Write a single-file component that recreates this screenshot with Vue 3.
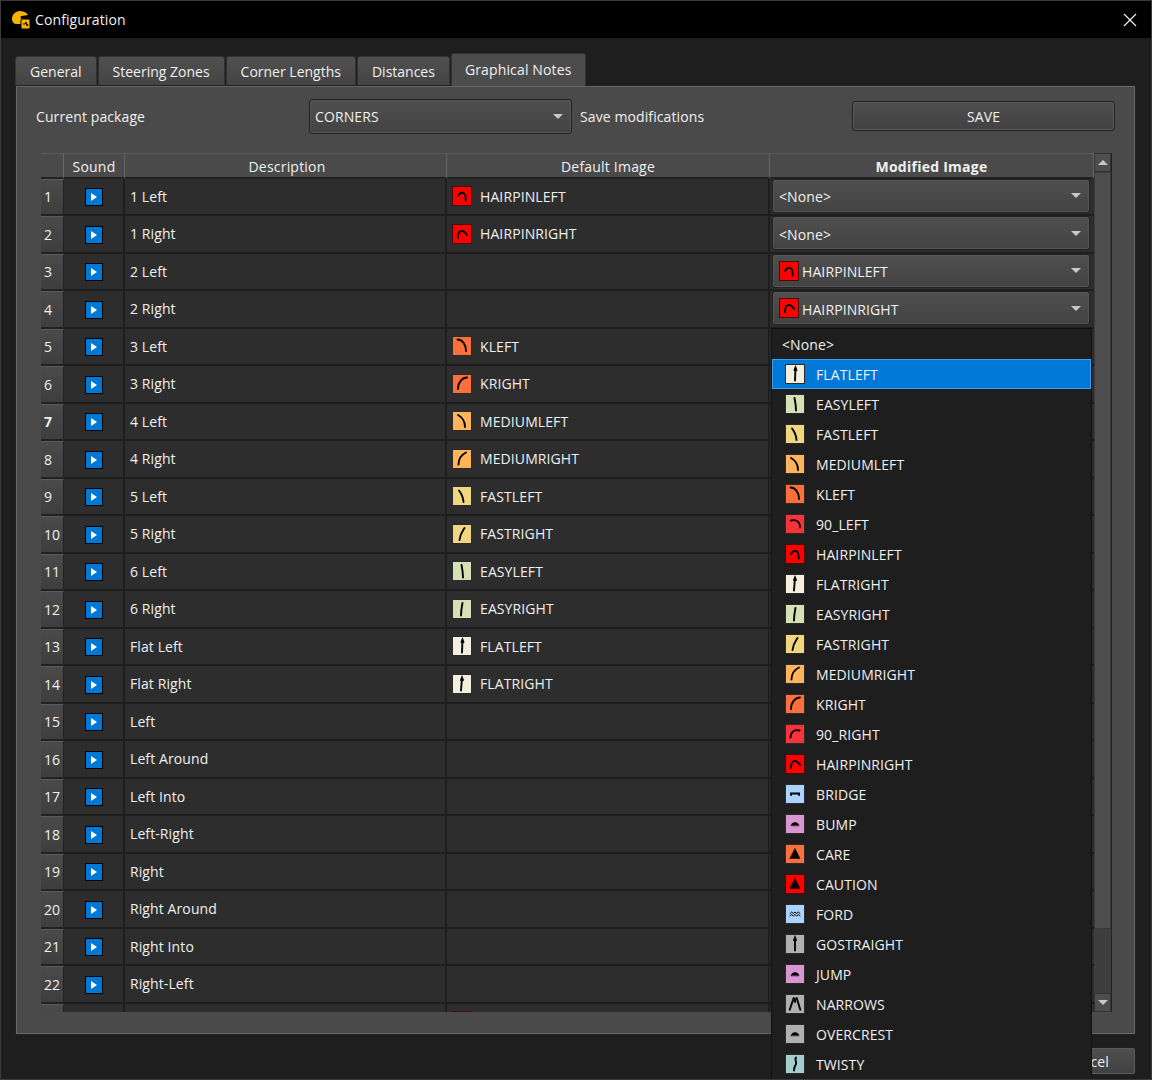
<template>
  <div class="window">
    <header class="titlebar">
      <svg class="app-icon" width="20" height="20" viewBox="0 0 20 20">
        <path d="M1 9C1 4 5 1 9 1c3 0 6 1 8 4l-6 1c-2 0-2 2 0 3v5H6C3 14 1 12 1 9z" fill="#f5b301" />
        <rect x="10" y="9" width="9" height="10" rx="1" fill="#f5b301" stroke="#000" />
        <path d="M12 14h2l1-2 1 4 1-2" fill="none" stroke="#000" />
      </svg>
      <span class="title">Configuration</span>
      <svg class="close" width="14" height="14" viewBox="0 0 14 14">
        <path d="M1 1l12 12M13 1L1 13" stroke="#f0f0f0" stroke-width="1.2" />
      </svg>
    </header>

    <div class="content">
      <nav class="tabs">
        <div v-for="tab in tabs" :key="tab" class="tab" :class="{ active: tab === 'Graphical Notes' }">{{ tab }}</div>
      </nav>

      <section class="panel">
        <div class="controls">
          <span class="package-label">Current package</span>
          <div class="combo package-combo">
            <span>CORNERS</span>
            <i class="caret"></i>
          </div>
          <span class="save-label">Save modifications</span>
          <button class="btn save-btn">SAVE</button>
        </div>

        <div class="table">
          <div class="table-main">
            <div class="row head">
              <div class="corner"></div>
              <div class="hcell">Sound</div>
              <div class="hcell description">Description</div>
              <div class="hcell">Default Image</div>
              <div class="hcell strong">Modified Image</div>
            </div>
            <div v-for="(row, i) in rows" :key="i" class="row">
              <div class="num" :class="{ bold: i === 6 }">{{ row.label ? i + 1 : '' }}</div>
              <div class="cell sound"><span v-if="row.label" class="play"><i></i></span></div>
              <div class="cell">{{ row.label }}</div>
              <div class="cell image">
                <template v-if="row.image">
                  <svg class="note" viewBox="0 0 20 20">
                    <rect x="0.5" y="0.5" width="19" height="19" :fill="notes[row.image].color" :stroke="edge(row.image)" />
                    <path :d="notes[row.image].path" :fill="notes[row.image].solid ? '#000' : 'none'" stroke="#000" :stroke-width="notes[row.image].solid ? 0.5 : 1.9" stroke-linecap="round" />
                  </svg>
                  <span v-if="row.label" class="image-name">{{ row.image }}</span>
                </template>
              </div>
              <div class="cell modified">
                <div v-if="i < 4" class="combo cell-combo">
                  <svg v-if="row.modified" class="note" viewBox="0 0 20 20">
                    <rect x="0.5" y="0.5" width="19" height="19" :fill="notes[row.modified].color" :stroke="edge(row.modified)" />
                    <path :d="notes[row.modified].path" fill="none" stroke="#000" stroke-width="1.9" stroke-linecap="round" />
                  </svg>
                  <span class="combo-text">{{ row.modified || '<None>' }}</span>
                  <i class="caret"></i>
                </div>
              </div>
            </div>
          </div>
          <div class="scrollbar">
            <div class="arrow"><i class="up"></i></div>
            <div class="thumb"></div>
            <div class="arrow bottom"><i class="caret"></i></div>
          </div>
        </div>
      </section>

      <footer class="actions">
        <button class="btn cancel-btn">Cancel</button>
      </footer>
    </div>

    <ul class="popup">
      <li class="none">&lt;None&gt;</li>
      <li v-for="name in options" :key="name" class="option" :class="{ selected: name === 'FLATLEFT' }">
        <svg class="note" viewBox="0 0 20 20">
          <rect x="0.5" y="0.5" width="19" height="19" :fill="notes[name].color" :stroke="edge(name)" />
          <path :d="notes[name].path" :fill="notes[name].solid ? '#000' : 'none'" stroke="#000" :stroke-width="notes[name].solid ? 0.5 : (notes[name].thin ? 1 : 1.9)" stroke-linecap="round" />
        </svg>
        <span>{{ name }}</span>
      </li>
    </ul>
  </div>
</template>

<script setup>
const tabs = ['General', 'Steering Zones', 'Corner Lengths', 'Distances', 'Graphical Notes']

const notes = {
  FLATLEFT: { color: '#f3efdf', path: 'M10.500 3.500L10 16.500M9.500 6l1-2.500 1 2.500' },
  EASYLEFT: { color: '#d6e0b4', path: 'M9.500 4C10 7 11 10 11 16.500' },
  FASTLEFT: { color: '#f0d77f', path: 'M7 4.500C9 7 11 10 11.500 16' },
  MEDIUMLEFT: { color: '#ffb35a', path: 'M6 4c4 2 7 6 7 12' },
  KLEFT: { color: '#ff6f3c', path: 'M5.500 3.500C10 3.500 14 8 14 15' },
  '90_LEFT': { color: '#f93339', path: 'M6 6.500c4-1 9 0 9 7' },
  HAIRPINLEFT: { color: '#ff0000', path: 'M6 10C7.500 7 10 6 12 7.500S13.500 12 13.700 14.500' },
  FLATRIGHT: { color: '#f3efdf', path: 'M10 3.500L9 16.500M9 6l1-2.500 1 2.500' },
  EASYRIGHT: { color: '#d6e0b4', path: 'M10.500 4C10 7 9 10 9 16.500' },
  FASTRIGHT: { color: '#f0d77f', path: 'M12.500 4C10.500 7 8 10 7.500 16' },
  MEDIUMRIGHT: { color: '#ffb35a', path: 'M14 3.500c-4 2-7.500 6-7.500 12' },
  KRIGHT: { color: '#ff6f3c', path: 'M15 3.500C10.500 3.500 6 8 6 15' },
  '90_RIGHT': { color: '#f93339', path: 'M14.500 6.500c-4-1-8.500 0-9 7' },
  HAIRPINRIGHT: { color: '#ff0000', path: 'M15 11C13 7.500 10 6 8 7.500S6 12 6 14' },
  BRIDGE: { color: '#aad4ff', path: 'M6 11V9.500h8V11' },
  BUMP: { color: '#d896d0', solid: true, path: 'M6 11.500c.5-2 2-3 4-3s3.500 1 4 3z' },
  CARE: { color: '#ff6f3c', solid: true, path: 'M10 4.500l5 10H5z' },
  CAUTION: { color: '#ff0000', solid: true, path: 'M10 4.500l5 10H5z' },
  FORD: { color: '#aad4ff', thin: true, path: 'M5 9.500l1.700-1.500 1.600 1.500L10 8l1.700 1.500L13.300 8l1.700 1.500M5 12l1.700-1.500 1.600 1.500 1.700-1.500 1.700 1.500 1.600-1.500L15 12' },
  GOSTRAIGHT: { color: '#b0b0b0', path: 'M10 3.500v13M9 6l1-2.500 1 2.500' },
  JUMP: { color: '#d896d0', solid: true, path: 'M6 11.500c.5-2 2-3 4-3s3.500 1 4 3z' },
  NARROWS: { color: '#b0b0b0', path: 'M8.700 4L4.700 15.700M11.700 4l3.600 11.700M10 5v3' },
  OVERCREST: { color: '#b0b0b0', solid: true, path: 'M6 11.500c.5-2 2-3 4-3s3.500 1 4 3z' },
  TWISTY: { color: '#a5cdd0', path: 'M11 3.500c-2 2 1 4 0 6.500s-2 3-2 6.500' }
}

const options = Object.keys(notes)

// border of a note icon, dark red on the red ones
const edge = (name) => (notes[name].color === '#ff0000' ? '#4a0808' : '#2a2a2a')

const rows = [
  { label: '1 Left', image: 'HAIRPINLEFT' },
  { label: '1 Right', image: 'HAIRPINRIGHT' },
  { label: '2 Left', modified: 'HAIRPINLEFT' },
  { label: '2 Right', modified: 'HAIRPINRIGHT' },
  { label: '3 Left', image: 'KLEFT' },
  { label: '3 Right', image: 'KRIGHT' },
  { label: '4 Left', image: 'MEDIUMLEFT' },
  { label: '4 Right', image: 'MEDIUMRIGHT' },
  { label: '5 Left', image: 'FASTLEFT' },
  { label: '5 Right', image: 'FASTRIGHT' },
  { label: '6 Left', image: 'EASYLEFT' },
  { label: '6 Right', image: 'EASYRIGHT' },
  { label: 'Flat Left', image: 'FLATLEFT' },
  { label: 'Flat Right', image: 'FLATRIGHT' },
  { label: 'Left' },
  { label: 'Left Around' },
  { label: 'Left Into' },
  { label: 'Left-Right' },
  { label: 'Right' },
  { label: 'Right Around' },
  { label: 'Right Into' },
  { label: 'Right-Left' },
  { label: '', image: 'CAUTION' }
]
</script>

<style>
html, body { background: #1e1e1e; }
</style>

<style scoped>
.window {
  position: relative;
  width: 1152px;
  height: 1080px;
  overflow: hidden;
  box-sizing: border-box;
  border: 1px solid #3a3a3a;
  background: #1e1e1e;
  color: #f0f0f0;
  font: 14px "Open Sans", sans-serif;
  letter-spacing: 0.1px;
}

.titlebar {
  display: flex;
  align-items: center;
  height: 37px;
  padding: 0 14px 0 10px;
  background: #000;
}
.app-icon { margin-right: 4px; }
.title { flex: 1; }

.content { padding: 15px 15px 0 14px; }

.tabs {
  display: flex;
  align-items: flex-end;
  gap: 1px;
  height: 32px;
}
.tab {
  height: 29px;
  box-sizing: border-box;
  padding: 5px 14px 0;
  border: 1px solid #333;
  border-bottom: 0;
  border-radius: 3px 3px 0 0;
  background: linear-gradient(#505050, #444);
  white-space: nowrap;
  letter-spacing: 0;
}
.tab.active {
  height: 33px;
  margin-bottom: -1px;
  padding: 6px 13px 0;
  background: #4c4c4c;
  position: relative;
  z-index: 1;
  letter-spacing: 0.14px;
}

.panel {
  height: 950px;
  box-sizing: border-box;
  padding: 12px 22px 0 25px;
  border: 1px solid #222;
  box-shadow: inset 0 0 0 1px #666;
  background: #4a4a4a;
}

.controls {
  display: flex;
  align-items: center;
  height: 36px;
  margin-left: -5px;
}
.controls > * { flex: none; }
.package-label { width: 273px; }
.combo {
  display: flex;
  align-items: center;
  box-sizing: border-box;
  border: 1px solid #222;
  border-radius: 3px;
  background: linear-gradient(#4f4f4f, #434343);
  box-shadow: inset 0 0 0 1px #555;
}
.package-combo {
  width: 263px;
  height: 35px;
  padding: 0 6px 0 5px;
  justify-content: space-between;
}
.save-label { width: 272px; margin-left: 8px; }
.btn {
  box-sizing: border-box;
  border: 1px solid #222;
  border-radius: 3px;
  background: linear-gradient(#505050, #404040);
  box-shadow: inset 0 0 0 1px #5a5a5a;
  color: #f0f0f0;
  font: inherit;
  letter-spacing: inherit;
}
.save-btn { width: 263px; height: 30px; }

.caret {
  display: block;
  width: 0;
  height: 0;
  border-left: 5px solid transparent;
  border-right: 5px solid transparent;
  border-top: 5px solid #c8c8c8;
  margin-right: 2px;
}

.table {
  display: flex;
  width: 1071px;
  height: 859px;
  margin-top: 19px;
  overflow: hidden;
}
.table-main { width: 1053px; }
.row {
  display: grid;
  grid-template-columns: 23px 61px 322px 323px 324px;
  height: 37.5px;
  box-sizing: border-box;
}
.row.head { height: 25.5px; }
.corner, .hcell {
  display: flex;
  align-items: flex-end;
  justify-content: center;
  box-sizing: border-box;
  border-top: 1px solid #5a5a5a;
  border-bottom: 2.5px solid #222;
  border-right: 1px solid #666;
  background: #4a4a4a;
}
.hcell { line-height: 20px; letter-spacing: 0.2px; }
.hcell.description { padding-left: 3px; }
.hcell.strong { font-weight: 700; letter-spacing: 0.25px; }
.num {
  display: flex;
  align-items: center;
  box-sizing: border-box;
  padding-left: 3px;
  border-top: 1px solid #5a5a5a;
  border-bottom: 2px solid #222;
  border-right: 1px solid #222;
  background: linear-gradient(#4a4a4a, #3e3e3e);
}
.num.bold { font-weight: 700; }
.cell {
  display: flex;
  align-items: center;
  box-sizing: border-box;
  padding-left: 5px;
  border-right: 2px solid #1e1e1e;
  border-bottom: 2px solid #1e1e1e;
  background: #2d2d2d;
}
.cell.sound { justify-content: center; padding: 2px 0 0; }
.play {
  display: flex;
  align-items: center;
  justify-content: center;
  width: 18px;
  height: 18px;
  box-sizing: border-box;
  border: 1px solid #000;
  background: #0078d7;
}
.play i {
  width: 0;
  height: 0;
  border-left: 6px solid #fff;
  border-top: 4px solid transparent;
  border-bottom: 4px solid transparent;
}
.note {
  flex: none;
  width: 20px;
  height: 20px;
}
.image-name { margin-left: 8px; }
.cell.modified { padding: 0 4px 0 2px; border-right: 0; }
.cell-combo {
  flex: 1;
  height: 34px;
  margin-bottom: 1.5px;
  padding: 0 7px 0 6px;
  gap: 3px;
}
.combo-text { padding-top: 2px; }
.cell-combo .caret { margin-left: auto; margin-right: 1px; }

.scrollbar {
  position: relative;
  display: flex;
  flex-direction: column;
  width: 18px;
  box-sizing: border-box;
  border-right: 1px solid #222;
  background: #3e3e3e;
}
.arrow {
  display: flex;
  align-items: center;
  justify-content: center;
  height: 17px;
  flex: none;
  border: 1px solid #333;
  background: #4e4e4e;
}
.arrow.bottom { margin-top: auto; }
.arrow .caret { margin: 0; }
.up {
  width: 0;
  height: 0;
  border-left: 5px solid transparent;
  border-right: 5px solid transparent;
  border-bottom: 5px solid #c8c8c8;
}
.thumb {
  height: 755px;
  background: #4e4e4e;
  border: 1px solid #3a3a3a;
}

.actions {
  display: flex;
  justify-content: flex-end;
  margin-top: 12px;
}
.cancel-btn { width: 100px; height: 28px; padding-left: 8px; }

.popup {
  position: absolute;
  left: 770px;
  top: 327px;
  width: 321px;
  height: 760px;
  margin: 0;
  padding: 0;
  box-sizing: border-box;
  list-style: none;
  background: #1e1e1e;
  border: 1px solid #111;
}
.none {
  height: 30px;
  line-height: 32px;
  padding-left: 10px;
}
.option {
  display: flex;
  align-items: center;
  height: 30px;
  box-sizing: border-box;
  padding-left: 13px;
  gap: 11px;
}
.option.selected {
  background: #0078d7;
  border: 1px solid #3aa0f0;
  padding-left: 12px;
}
</style>
